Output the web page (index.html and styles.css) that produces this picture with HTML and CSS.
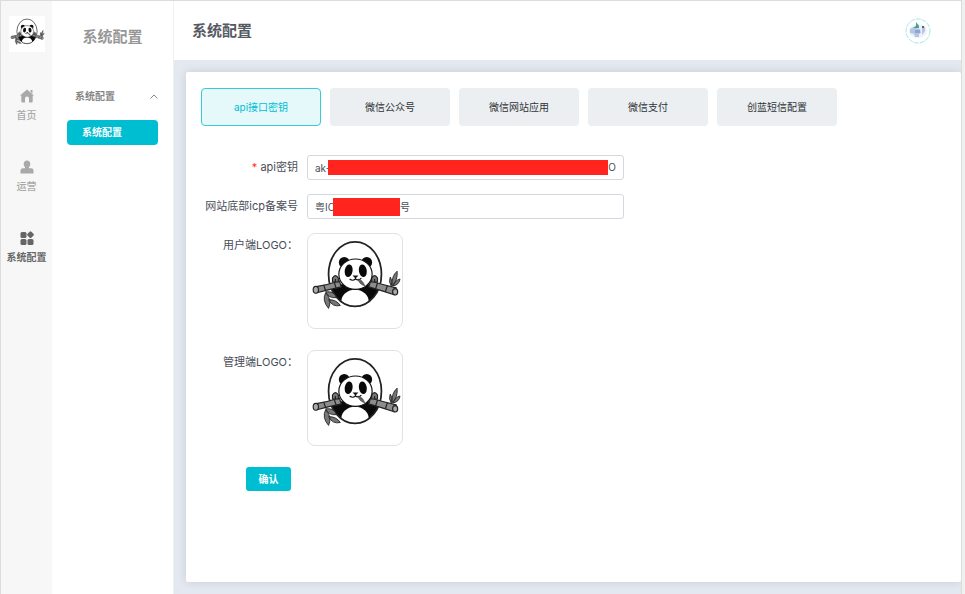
FILE: index.html
```html
<!DOCTYPE html>
<html lang="zh-CN">
<head>
<meta charset="utf-8">
<title>系统配置</title>
<link rel="stylesheet" href="styles.css">
</head>
<body>
<svg class="defs" aria-hidden="true">
  <symbol id="panda" viewBox="0 0 96 96">
    <clipPath id="ring"><ellipse cx="48" cy="41" rx="27" ry="33"/></clipPath>
    <ellipse cx="48" cy="41" rx="27" ry="33" fill="#fff"/>
    <g clip-path="url(#ring)">
      <path d="M20 52Q48 50 76 52V76H20Z" fill="#0a0a0a"/>
      <ellipse cx="48" cy="69" rx="14" ry="12" fill="#fff"/>
    </g>
    <ellipse cx="48" cy="41" rx="27" ry="33" fill="none" stroke="#222" stroke-width="1.8"/>
    <g stroke="#222" stroke-width="1.2">
      <path d="M7 54Q20 52 32 48L34 54Q20 57 9 60Z" fill="#8c8c8c"/>
      <path d="M16 52l2 6M27 50l2 6" fill="none"/>
      <ellipse cx="8" cy="57" rx="2.7" ry="3.5" fill="#aaa"/>
      <path d="M64 48Q77 52 90 55L88 62Q76 58 62 54Z" fill="#8c8c8c"/>
      <path d="M71 50l-2 6M81 53l-2 6" fill="none"/>
      <ellipse cx="89" cy="59" rx="2.6" ry="3.3" fill="#aaa"/>
      <path d="M25 49v-4q3-5 6 0v4zM65 49v-4q3-5 6 0v4z" fill="#777"/>
      <path d="M28 49v-3M68 49v-3" fill="none"/>
    </g>
    <circle cx="37" cy="29" r="5.500" fill="#0a0a0a"/>
    <circle cx="60" cy="29" r="5.500" fill="#0a0a0a"/>
    <ellipse cx="48.500" cy="41" rx="17" ry="15.500" fill="#fff" stroke="#111" stroke-width="1.200"/>
    <ellipse cx="41.500" cy="37.500" rx="4" ry="6.500" fill="#0a0a0a" transform="rotate(10 41.500 37.500)"/>
    <ellipse cx="56" cy="37.500" rx="4" ry="6.500" fill="#0a0a0a" transform="rotate(-10 56 37.500)"/>
    <path d="M45.500 42.500h6l-3 3z" fill="#111"/>
    <path d="M48.500 44v2q-3 2.500-6 0M48.500 46q3 2 6-1" fill="none" stroke="#111" stroke-width="1.200"/>
    <path d="M51 46q5 1 7 7q-6-2-7-7z" fill="#666" stroke="#333" stroke-width=".600"/>
    <g fill="#777" stroke="#222" stroke-width=".900">
      <path d="M18 59q9-1 11 6q-8 1-11-6zM18 60q-4 8 3 16q4-9-3-16zM21 67q8 0 12 6q-8 2-12-6z"/>
      <path d="M85 53q-3-4-1-9q3 4 1 9zM86 53q-1-10 5-15q1 9-5 15zM87 53q2-6 7-7q-1 6-7 7z"/>
    </g>
  </symbol>
</svg>
<div class="app">
  <nav class="rail" aria-label="主导航">
    <svg class="brand" role="img" aria-label="LOGO"><use href="#panda"/></svg>
    <a class="rail-item" href="#">
      <svg viewBox="0 0 14 14"><path d="M7 0.500L14 6.500H12.700V12.500Q12.700 13.500 11.700 13.500H9V9.500Q9 7.500 7 7.500T5 9.500V13.500H2.300Q1.300 13.500 1.300 12.500V6.500H0ZM10.500 1h2v3.500l-2-1.500z"/></svg>
      <span>首页</span>
    </a>
    <a class="rail-item" href="#">
      <svg viewBox="0 0 14 14"><path d="M7 0.500C9 0.500 10.300 1.700 10.300 4C10.300 5.500 9.600 6.500 9 7.200V8.300H11C12.800 8.300 13.500 9.300 13.500 11V13.500H.5V11C.5 9.300 1.200 8.300 3 8.300H5V7.200C4.400 6.500 3.700 5.500 3.700 4C3.700 1.700 5 .5 7 .5Z"/></svg>
      <span>运营</span>
    </a>
    <a class="rail-item current" href="#">
      <svg viewBox="0 0 14 14"><rect x=".5" y="1" width="6" height="6" rx="1.500"/><rect x=".5" y="8" width="6" height="6" rx="1.500"/><rect x="7.500" y="8" width="6" height="6" rx="1.500"/><rect x="7.800" y="1" width="5.400" height="5.400" rx="1.200" transform="rotate(45 10.500 3.700)"/></svg>
      <span>系统配置</span>
    </a>
  </nav>
  <aside class="menu">
    <h2>系统配置</h2>
    <button class="menu-group" type="button" aria-expanded="true">系统配置
      <svg viewBox="0 0 8 5"><path d="M.5 4.500L4 1l3.500 3.500"/></svg>
    </button>
    <a class="menu-item" href="#">系统配置</a>
  </aside>
  <div class="main">
    <header class="topbar">
      <h1>系统配置</h1>
      <svg class="avatar" viewBox="0 0 26 26" role="img" aria-label="头像">
        <circle cx="13" cy="13" r="12" fill="#fff" stroke="#a5e8ec" stroke-dasharray="5 1"/>
        <ellipse cx="13" cy="13" rx="9" ry="7" fill="#edf1fa"/>
        <path d="M5 11l4-2 2 1 4 1 1 4-2 1v3h-4l-1-3-4-1z" fill="#b6c5e6"/>
        <path d="M10 12h5v3h-5z" fill="#8da6d4"/>
        <path d="M11 4l3 4v2H8l3-2z" fill="#45a184"/>
        <path d="M17 8l3 1v4l-3 4z" fill="#b9c4e2"/>
        <path d="M17 8h2v2h-2z" fill="#4f6096"/>
      </svg>
    </header>
    <main class="content">
      <section class="card">
        <div class="tabs">
          <button class="tab active" type="button">api接口密钥</button>
          <button class="tab" type="button">微信公众号</button>
          <button class="tab" type="button">微信网站应用</button>
          <button class="tab" type="button">微信支付</button>
          <button class="tab" type="button">创蓝短信配置</button>
        </div>
        <form class="form">
          <label for="key"><b>*</b> api密钥</label>
          <div class="field">
            <input id="key" type="text" value="ak-" required>
            <div class="mask mask-key"><i></i><span>O</span></div>
          </div>
          <label for="icp">网站底部icp备案号</label>
          <div class="field">
            <input id="icp" type="text" value="粤IC">
            <div class="mask mask-icp"><i></i><span>号</span></div>
          </div>
          <label for="user-logo">用户端LOGO：</label>
          <button class="upload" id="user-logo" type="button"><svg><use href="#panda"/></svg></button>
          <label for="admin-logo">管理端LOGO：</label>
          <button class="upload" id="admin-logo" type="button"><svg><use href="#panda"/></svg></button>
          <button class="submit" type="submit">确认</button>
        </form>
      </section>
    </main>
  </div>
</div>
</body>
</html>
```
FILE: styles.css
```css
* {
  box-sizing: border-box;
}

body {
  margin: 0;
  padding-right: 3px;
  background: #eff1f1;
  color: #4a4e57;
  font: 10px/16px Inter, "Noto Sans CJK SC", sans-serif;
}

button,
input {
  margin: 0;
  color: inherit;
  font: inherit;
}

button {
  cursor: pointer;
}

a {
  color: inherit;
  text-decoration: none;
}

h1,
h2 {
  margin: 0;
  font-size: 15px;
  line-height: 24px;
  font-weight: 700;
}

h1 {
  color: #555962;
}

.defs {
  position: absolute;
  width: 0;
  height: 0;
}

.app {
  display: flex;
  min-height: 100vh;
  border: 1px solid #dcdcdc;
  border-bottom: 0;
  background: #fff;
}

.rail {
  display: flex;
  flex: 0 0 51px;
  flex-direction: column;
  align-items: center;
  background: #f7f7f7;
}

.brand {
  width: 36px;
  height: 36px;
  margin: 15px 0 37px;
  background: #fff;
}

.rail-item {
  display: flex;
  flex-direction: column;
  align-items: center;
  gap: 4px;
  margin-bottom: 37px;
  color: #a9a9a9;
  font-weight: 500;
  white-space: nowrap;
}

.rail-item svg {
  width: 14px;
  height: 14px;
  fill: currentColor;
}

.rail-item.current {
  color: #666;
  font-weight: 700;
}

.menu {
  flex: 0 0 122px;
  padding: 24px 15px;
  border-right: 1px solid #f1f1f1;
}

.menu h2 {
  color: #979797;
  text-align: center;
}

.menu-group {
  display: flex;
  align-items: center;
  justify-content: space-between;
  width: 100%;
  margin: 36px 0 13px;
  padding: 3px 0 3px 8px;
  border: 0;
  background: none;
  color: #868686;
  font-weight: 700;
}

.menu-group svg {
  width: 8px;
  height: 5px;
  fill: none;
  stroke: currentColor;
}

.menu-item {
  display: block;
  padding: 4px 15px 5px;
  border-radius: 4px;
  background: #00bed2;
  color: #fff;
  font-weight: 700;
}

.main {
  display: flex;
  flex: 1;
  flex-direction: column;
  min-width: 0;
}

.topbar {
  display: flex;
  align-items: center;
  justify-content: space-between;
  height: 59px;
  padding: 0 30px 0 18px;
}

.avatar {
  width: 26px;
  height: 26px;
}

.content {
  display: flex;
  flex: 1;
  padding: 12px 0 12px 12px;
  overflow: hidden;
  background: #e4e9f1;
}

.card {
  flex: 1;
  min-width: 0;
  padding: 16px 15px;
  border-radius: 2px;
  background: #fff;
  box-shadow: 0 0 10px rgba(0, 0, 0, 0.12);
}

.tabs {
  display: flex;
  gap: 9px;
}

.tab {
  width: 120px;
  height: 38px;
  padding: 0;
  border: 0;
  border-radius: 4px;
  background: #ebeff2;
  color: #303336;
}

.tab.active {
  border: 1px solid #37cbd7;
  background: #e5f8fa;
  color: #00bed2;
}

.form {
  display: grid;
  grid-template-columns: 97px 317px;
  column-gap: 9px;
  margin-top: 29px;
}

.form label {
  padding-top: 4px;
  font-size: 11px;
  text-align: right;
  white-space: nowrap;
}

.form b {
  color: #f33;
  font-weight: 400;
}

.field {
  position: relative;
  margin-bottom: 14px;
}

.field input {
  display: block;
  width: 100%;
  height: 25px;
  padding: 0 7px;
  border: 1px solid #d2d8de;
  border-radius: 3px;
  background: #fff;
}

.mask {
  position: absolute;
  top: 4px;
  display: flex;
  align-items: center;
}

.mask i {
  height: 15px;
  background: #ff241d;
}

.mask-key {
  right: 8px;
  left: 21px;
}

.mask-key i {
  flex: 1;
}

.mask-icp {
  left: 26px;
}

.mask-icp i {
  width: 67px;
  height: 18px;
}

.upload {
  width: 96px;
  height: 96px;
  margin-bottom: 21px;
  padding: 0;
  border: 1px solid #e2e2e2;
  border-radius: 8px;
  background: #fff;
}

.upload svg {
  display: block;
  width: 100%;
  height: 100%;
}

.submit {
  width: 45px;
  height: 24px;
  margin-left: 45px;
  padding: 0;
  border: 0;
  border-radius: 3px;
  background: #00bed2;
  color: #fff;
  font-weight: 700;
}
```
